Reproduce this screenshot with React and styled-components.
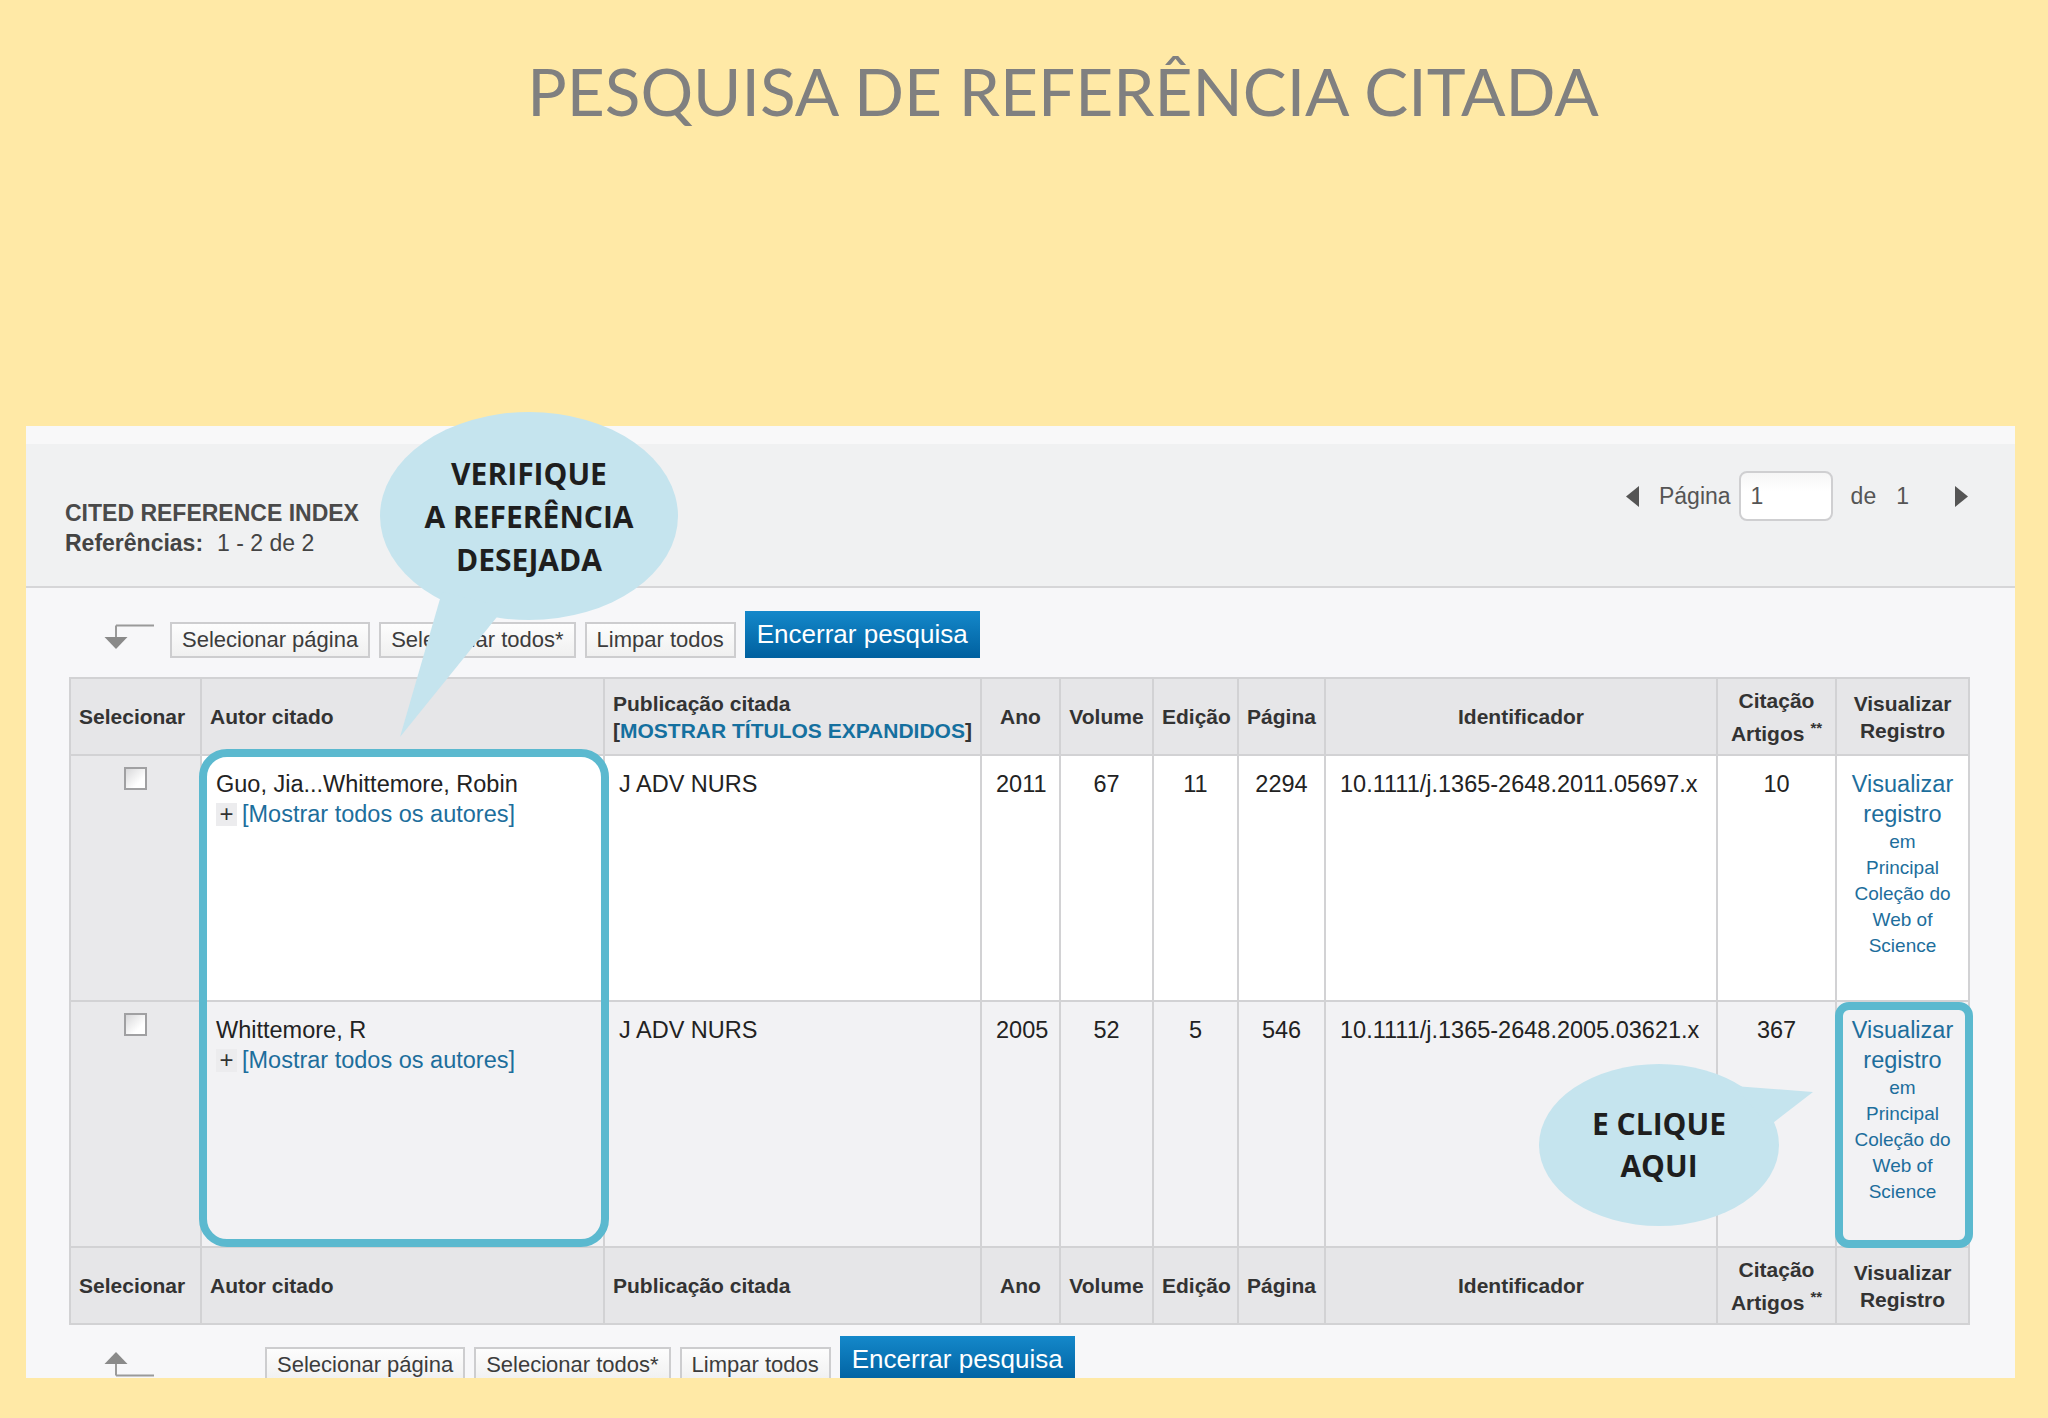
import styled, { createGlobalStyle } from 'styled-components'

const GlobalStyle = createGlobalStyle`
  html, body {
    margin: 0;
    padding: 0;
    background: #ffe9a6;
  }
  body {
    font-family: "Liberation Sans", Arial, sans-serif;
  }
`

const Page = styled.div`
  position: relative;
  width: 2048px;
  height: 1418px;
  overflow: hidden;
  background: #ffe9a6;
  display: flex;
  flex-direction: column;
  align-items: center;
`
const Title = styled.h1`
  margin: 52px 0 0 78px;
  font-family: Lato, "Open Sans", sans-serif;
  font-weight: 400;
  font-size: 65.8px;
  line-height: 77px;
  color: #808080;
  white-space: nowrap;
`
const Panel = styled.div`
  align-self: flex-start;
  margin: 297px 0 0 26px;
  width: 1989px;
  height: 952px;
  overflow: hidden;
  display: flex;
  flex-direction: column;
  background: #f7f7f9;
`
const PanelHeader = styled.div`
  height: 160px;
  flex-shrink: 0;
  display: flex;
  justify-content: space-between;
  align-items: flex-start;
  padding: 0 47px 0 39px;
  background: linear-gradient(#f8f8f9 0, #f8f8f9 18px, #f0f1f2 18px);
  border-bottom: 2px solid #d6d6d8;
`
const IndexInfo = styled.div`
  margin-top: 72px;
  font-size: 23px;
  line-height: 30px;
  color: #444;
`
const IndexTitle = styled.div`
  font-weight: 700;
  color: #4a4a4a;
`
const Label = styled.span`
  font-weight: 700;
  margin-right: 14px;
`
const Pager = styled.div`
  margin-top: 45px;
  display: flex;
  align-items: center;
  gap: 20px;
  font-size: 23px;
  color: #555;
`
const PageInput = styled.div`
  width: 94px;
  height: 50px;
  box-sizing: border-box;
  border: 2px solid #cfcfd1;
  border-radius: 8px;
  background: linear-gradient(#f6f6f6, #ffffff 40%);
  padding: 0 10px;
  display: flex;
  align-items: center;
  margin: 0 -2px 0 -12px;
`
const NextSlot = styled.span`
  display: flex;
  margin-left: 26px;
`
const PanelBody = styled.div`
  flex: 1;
  padding: 23px 47px 0 43px;
  display: flex;
  flex-direction: column;
`
const Toolbar = styled.div`
  display: flex;
  align-items: flex-end;
  height: 47px;
  gap: 9px;
  margin-top: ${p => p.$top || 0}px;
`
const ArrowSlot = styled.div`
  width: 50px;
  height: 26px;
  margin: 0 ${p => p.$gap}px ${p => p.$bottom}px 35px;
  svg { display: block; }
`
const GreyButton = styled.button`
  height: 36px;
  padding: 0 10px;
  border: 2px solid #cdcdcf;
  background: linear-gradient(#fdfdfd, #f0f0f0);
  font-family: "Liberation Sans", Arial, sans-serif;
  font-size: 22px;
  color: #3c3c3c;
`
const BlueButton = styled.button`
  height: 47px;
  padding: 0 12px;
  border: 0;
  background: linear-gradient(#1488ca, #00609f);
  font-family: "Liberation Sans", Arial, sans-serif;
  font-size: 26px;
  color: #fff;
`
const TableWrap = styled.div`
  position: relative;
  margin-top: 19px;
`
const Table = styled.table`
  border-collapse: collapse;
  table-layout: fixed;
  width: 1899px;
  font-size: 23.5px;
  color: #222;
`
const Th = styled.th`
  height: 75px;
  padding: 0 8px;
  background: #e6e6e8;
  border: 2px solid #d2d2d4;
  font-size: 21px;
  font-weight: 700;
  line-height: 27px;
  color: #333;
  text-align: ${p => p.$align || 'center'};
  vertical-align: middle;
  white-space: nowrap;
`
const Blue = styled.span`
  color: #15709f;
`
const Sup = styled.sup`
  font-size: 15px;
  vertical-align: 8px;
  margin-left: 6px;
`
const Td = styled.td`
  height: 218px;
  padding: 13px 14px;
  background: ${p => p.$bg};
  border: 2px solid #d2d2d4;
  line-height: 30px;
  text-align: ${p => p.$align || 'left'};
  vertical-align: top;
`
const CheckBox = styled.div`
  width: 19px;
  height: 19px;
  margin: -2px auto 0;
  border: 2px solid #a0a0a2;
  background: linear-gradient(135deg, #d8d8da, #ffffff 70%);
`
const LinkLine = styled.div`
  display: flex;
  align-items: center;
  gap: 5px;
`
const PlusBox = styled.span`
  width: 21px;
  height: 23px;
  display: inline-flex;
  align-items: center;
  justify-content: center;
  background: #ececee;
  color: #333;
  font-size: 24px;
  line-height: 1;
`
const Link = styled.span`
  color: #1d6e9c;
`
const ViewLink = styled.div`
  color: #1d6e9c;
  line-height: ${p => (p.$small ? 26 : 30)}px;
  font-size: ${p => (p.$small ? 19 : 23.5)}px;
`
const Highlight = styled.div`
  position: absolute;
  left: ${p => p.$x}px;
  top: ${p => p.$y}px;
  width: ${p => p.$w}px;
  height: ${p => p.$h}px;
  box-sizing: border-box;
  border: 8px solid #5bb9cf;
  border-radius: ${p => p.$r}px;
  pointer-events: none;
`
const Bubble = styled.div`
  position: absolute;
  left: ${p => p.$x}px;
  top: ${p => p.$y}px;
  svg { position: absolute; left: 0; top: 0; }
`
const BubbleText = styled.div`
  position: absolute;
  left: ${p => p.$cx - 200}px;
  top: ${p => p.$cy}px;
  width: 400px;
  transform: translateY(-50%);
  text-align: center;
  font-family: "Open Sans", "Liberation Sans", sans-serif;
  font-weight: 700;
  font-size: 30px;
  line-height: ${p => p.$lh}px;
  color: #1e1e1e;
`

const DownArrow = () => (
  <svg width="50" height="26" viewBox="0 0 50 26">
    <path d="M12 1.5 H50 M12 1.5 V14" stroke="#9a9a9a" strokeWidth="2" fill="none" />
    <path d="M0.5 13 H23.5 L12 25 Z" fill="#8a8a8a" />
  </svg>
)

const UpArrow = () => (
  <svg width="50" height="26" viewBox="0 0 50 26">
    <path d="M12 24.5 H50 M12 24.5 V12" stroke="#9a9a9a" strokeWidth="2" fill="none" />
    <path d="M0.5 13 H23.5 L12 1 Z" fill="#8a8a8a" />
  </svg>
)

const Tri = ({ dir }) => (
  <svg width="13" height="21" viewBox="0 0 13 21">
    <path d={dir === 'left' ? 'M13 0 V21 L0 10.5 Z' : 'M0 0 V21 L13 10.5 Z'} fill="#555" />
  </svg>
)

const rows = [
  { author: 'Guo, Jia...Whittemore, Robin', year: '2011', vol: '67', ed: '11', page: '2294', id: '10.1111/j.1365-2648.2011.05697.x', cites: '10', bg: '#ffffff' },
  { author: 'Whittemore, R', year: '2005', vol: '52', ed: '5', page: '546', id: '10.1111/j.1365-2648.2005.03621.x', cites: '367', bg: '#f2f2f4' },
]

const widths = [131, 403, 377, 79, 93, 85, 87, 392, 119, 133]

const HeadRow = ({ expand }) => (
  <tr>
    <Th $align="left">Selecionar</Th>
    <Th $align="left">Autor citado</Th>
    <Th $align="left">
      Publicação citada
      {expand && (<><br />[<Blue>MOSTRAR TÍTULOS EXPANDIDOS</Blue>]</>)}
    </Th>
    <Th>Ano</Th>
    <Th>Volume</Th>
    <Th>Edição</Th>
    <Th>Página</Th>
    <Th>Identificador</Th>
    <Th>Citação<br />Artigos<Sup>**</Sup></Th>
    <Th>Visualizar<br />Registro</Th>
  </tr>
)

const Buttons = () => (
  <>
    <GreyButton>Selecionar página</GreyButton>
    <GreyButton>Selecionar todos*</GreyButton>
    <GreyButton>Limpar todos</GreyButton>
    <BlueButton>Encerrar pesquisa</BlueButton>
  </>
)

const App = () => {
  return (
    <>
      <GlobalStyle />
      <Page>
        <Title>PESQUISA DE REFERÊNCIA CITADA</Title>
        <Panel>
          <PanelHeader>
            <IndexInfo>
              <IndexTitle>CITED REFERENCE INDEX</IndexTitle>
              <div><Label>Referências:</Label>1 - 2 de 2</div>
            </IndexInfo>
            <Pager>
              <Tri dir="left" />
              <span>Página</span>
              <PageInput>1</PageInput>
              <span>de</span>
              <span>1</span>
              <NextSlot><Tri dir="right" /></NextSlot>
            </Pager>
          </PanelHeader>
          <PanelBody>
            <Toolbar>
              <ArrowSlot $gap={7} $bottom={8}><DownArrow /></ArrowSlot>
              <Buttons />
            </Toolbar>
            <TableWrap>
              <Table>
                <colgroup>
                  {widths.map((w, i) => <col key={i} style={{ width: w }} />)}
                </colgroup>
                <thead>
                  <HeadRow expand />
                </thead>
                <tbody>
                  {rows.map(r => (
                    <tr key={r.id}>
                      <Td $bg="#e9e9eb"><CheckBox /></Td>
                      <Td $bg={r.bg}>
                        <div>{r.author}</div>
                        <LinkLine><PlusBox>+</PlusBox><Link>[Mostrar todos os autores]</Link></LinkLine>
                      </Td>
                      <Td $bg={r.bg}>J ADV NURS</Td>
                      <Td $bg={r.bg} $align="center">{r.year}</Td>
                      <Td $bg={r.bg} $align="center">{r.vol}</Td>
                      <Td $bg={r.bg} $align="center">{r.ed}</Td>
                      <Td $bg={r.bg} $align="center">{r.page}</Td>
                      <Td $bg={r.bg}>{r.id}</Td>
                      <Td $bg={r.bg} $align="center">{r.cites}</Td>
                      <Td $bg={r.bg} $align="center">
                        <ViewLink>Visualizar</ViewLink>
                        <ViewLink>registro</ViewLink>
                        <ViewLink $small>em</ViewLink>
                        <ViewLink $small>Principal</ViewLink>
                        <ViewLink $small>Coleção do</ViewLink>
                        <ViewLink $small>Web of</ViewLink>
                        <ViewLink $small>Science</ViewLink>
                      </Td>
                    </tr>
                  ))}
                </tbody>
                <tfoot>
                  <HeadRow />
                </tfoot>
              </Table>
              <Highlight $x={130} $y={72} $w={410} $h={498} $r={28} />
              <Highlight $x={1766} $y={325} $w={138} $h={246} $r={14} />
            </TableWrap>
            <Toolbar $top={11}>
              <ArrowSlot $gap={102} $bottom={6}><UpArrow /></ArrowSlot>
              <Buttons />
            </Toolbar>
          </PanelBody>
        </Panel>

        <Bubble $x={380} $y={412}>
          <svg width="300" height="330" viewBox="0 0 300 330">
            <ellipse cx="149" cy="104" rx="149" ry="104" fill="#c5e4ee" />
            <path d="M62 180 L125 195 L20 325 Z" fill="#c5e4ee" />
          </svg>
          <BubbleText $cx={149} $cy={104} $lh={43}>VERIFIQUE<br />A REFERÊNCIA<br />DESEJADA</BubbleText>
        </Bubble>

        <Bubble $x={1539} $y={1064}>
          <svg width="280" height="170" viewBox="0 0 280 170">
            <ellipse cx="120" cy="81" rx="120" ry="81" fill="#c5e4ee" />
            <path d="M195 22 L274 28 L230 62 Z" fill="#c5e4ee" />
          </svg>
          <BubbleText $cx={120} $cy={81} $lh={42}>E CLIQUE<br />AQUI</BubbleText>
        </Bubble>
      </Page>
    </>
  )
}

export default App
